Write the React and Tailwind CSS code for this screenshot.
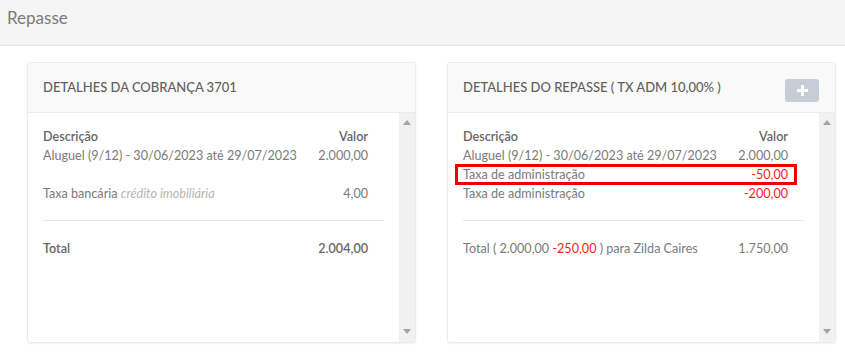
import React from "react";

const Up = () => (
  <svg width="8" height="5" viewBox="0 0 8 5"><path d="M0 5 L4 0 L8 5 Z" fill="#a3a3a3" /></svg>
);
const Down = () => (
  <svg width="8" height="5" viewBox="0 0 8 5"><path d="M0 0 L4 5 L8 0 Z" fill="#a3a3a3" /></svg>
);

function Card({ title, button, children }) {
  return (
    <div className="w-[389px] h-[281px] flex flex-col bg-white border border-[#ececef] rounded-[3px] shadow-[0_1px_2px_rgba(0,0,0,0.06)] overflow-hidden">
      <div className="h-[50px] shrink-0 bg-[#f9f9f9] border-b border-[#eaeaf0] flex items-center justify-between pl-[15px] pr-[15px]">
        <span className="text-[13px] text-[#5f5f5f] font-medium">{title}</span>
        {button}
      </div>
      <div className="flex-1 flex min-h-0">
        <div className="flex-1 pl-[15px] pr-[15px] pt-[14px] text-[12.6px] text-[#7a7a7a]">{children}</div>
        <div className="w-[16px] bg-[#f1f1f1] flex flex-col items-center justify-between pt-[7px] pb-[8px]">
          <Up />
          <Down />
        </div>
      </div>
    </div>
  );
}

function Row({ left, right, className = "", children }) {
  return (
    <div className={"relative h-[19px] flex items-center justify-between pr-[16px] leading-[19px] " + className}>
      <span className="whitespace-nowrap">{left}</span>
      <span className="whitespace-nowrap">{right}</span>
      {children}
    </div>
  );
}

export default function App() {
  return (
    <div className="w-[845px] h-[362px] bg-white overflow-hidden" style={{ fontFamily: "Lato, 'Open Sans', sans-serif" }}>
      <div className="h-[46px] bg-[#f5f5f5] border-b border-[#e4e4e4] pl-[7px] pt-[6px]">
        <span className="text-[17px] leading-[24px] text-[#7a7a7a]">Repasse</span>
      </div>
      <div className="flex gap-[31px] pl-[27px] pt-[16px]">
        <Card title="DETALHES DA COBRANÇA 3701">
          <Row left={<span className="text-[#666] font-semibold">Descrição</span>} right={<span className="text-[#666] font-semibold">Valor</span>} />
          <Row left="Aluguel (9/12) - 30/06/2023 até 29/07/2023" right="2.000,00" />
          <Row left="" right="" />
          <Row
            left={<>Taxa bancária <i className="text-[#b5b5b5]">crédito imobiliária</i></>}
            right="4,00"
          />
          <div className="h-px bg-[#e8e8e8] mt-[17px] mb-[18px]" />
          <Row left={<span className="text-[#666] font-semibold">Total</span>} right={<span className="text-[#666] font-semibold">2.004,00</span>} />
        </Card>
        <Card
          title="DETALHES DO REPASSE ( TX ADM 10,00% )"
          button={
            <div className="w-[34px] h-[23px] bg-[#c8ccd6] rounded-[3px] flex items-center justify-center mt-[5px] mr-[1px]">
              <svg width="11" height="11" viewBox="0 0 11 11"><path d="M4 0h3v4h4v3H7v4H4V7H0V4h4z" fill="#fff" /></svg>
            </div>
          }
        >
          <Row left={<span className="text-[#666] font-semibold">Descrição</span>} right={<span className="text-[#666] font-semibold">Valor</span>} />
          <Row left="Aluguel (9/12) - 30/06/2023 até 29/07/2023" right="2.000,00" />
          <Row left="Taxa de administração" right={<span className="text-[#ff1a1a]">-50,00</span>}>
            <div className="absolute left-[-8px] right-[7px] top-[-1px] bottom-[-1px] border-[3px] border-[#ee0000]" />
          </Row>
          <Row left="Taxa de administração" right={<span className="text-[#ff1a1a]">-200,00</span>} />
          <div className="h-px bg-[#e8e8e8] mt-[17px] mb-[18px]" />
          <Row
            left={<>Total ( 2.000,00 <span className="text-[#ff1a1a]">-250,00</span> ) para Zilda Caires</>}
            right="1.750,00"
          />
        </Card>
      </div>
    </div>
  );
}
